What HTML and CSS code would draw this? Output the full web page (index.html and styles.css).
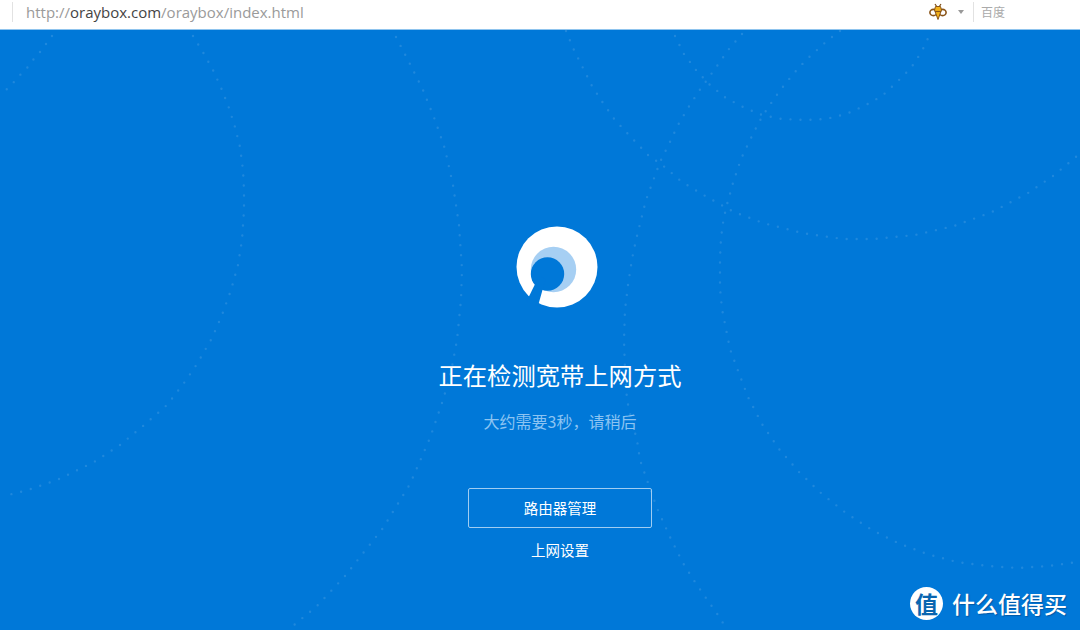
FILE: index.html
```html
<!DOCTYPE html>
<html lang="zh-CN">
<head>
<meta charset="utf-8">
<title>oraybox</title>
<link rel="stylesheet" href="styles.css">
</head>
<body>
<header class="bar">
  <div class="url"><span class="dim">http://</span><span class="host">oraybox.com</span><span class="dim">/oraybox/index.html</span></div>
  <div class="search">
    <svg class="bee" width="18" height="18" viewBox="0 0 18 18">
      <path class="bee-line" d="M6 1 8 4M12 1 10 4"/>
      <ellipse class="bee-wing" cx="4.4" cy="9.5" rx="3.5" ry="3.1"/>
      <ellipse class="bee-wing" cx="13.6" cy="9.5" rx="3.5" ry="3.1"/>
      <path class="bee-body" d="M6.5 3.5h5l1 3.5-3.500 9.500-3.500-9.500z"/>
      <path class="bee-band" d="M5.800 8.500h6.400"/>
    </svg>
    <svg class="caret" width="6" height="4" viewBox="0 0 6 4"><path d="M0 0h6L3 4z"/></svg>
    <span class="divider"></span>
    <span class="engine">百度</span>
  </div>
</header>
<main class="stage">
  <svg class="curves" width="1080" height="600" viewBox="0 30 1080 600">
    <polyline points="52,36 46,44 40,52 33,60 27,68 20,75 13,83 6,90 0,95"/>
    <polyline points="193,36 204,54 214,72 222,90 229,108 235,127 240,147 243,170 244,190 244,210 242,240 238,265 231,290 222,315 212,338 197,364 184,383 167,405 143,426 120,445 94,462 57,480 28,490 8,495"/>
    <polyline points="396,37 410,64 423,90 435,120 445,149 453,185 459,225 462,269 461,300 459,320 457,340 451,372 443,400 430,438 410,484 383,528 345,576 317,606 294,625"/>
    <polyline points="566,31 574,50 583,68 592,86 603,103 615,120 629,135 650,157 660,163 682,182 707,197 734,212 763,223 802,233 843,239 874,239 915,235 954,226 992,212 1028,193 1053,176 1077,156"/>
    <polyline points="840,31 828,40 817,50 806,60 795,72 785,84 776,96 767,109 759,122 750,140 741,159 733,183 726,208 723,223 721,238 720,258 720,288 722,309 726,329 730,349 737,368 748,397 762,424 779,449 799,472 822,494 846,513 872,530 898,543 927,554 957,562 988,566 1018,568 1048,566 1078,562"/>
    <polyline points="675,36 684,54 696,70 710,85 726,98 743,107 762,115 782,119 806,120 826,119 846,114 864,106 882,96 897,82 911,68 922,51 931,32"/>
    <polyline points="742,34 729,49 717,66 699,91 688,108 678,125 669,144 660,162 653,181 646,200 641,220 636,240 632,259 628,285 625,310 624,340 625,370 627,400 632,422 637,440 640,460 647,480 657,508 670,537 683,563 695,582 706,598 718,615 723,623"/>
  </svg>
  <div class="panel">
    <svg class="logo" width="82" height="82" viewBox="0 0 82 82">
      <circle class="logo-white" cx="41" cy="41" r="40.5"/>
      <circle class="logo-light" cx="37.500" cy="43.500" r="22.700"/>
      <circle class="logo-hole" cx="31.500" cy="48" r="16.700"/>
      <path class="logo-hole" d="M23 50 29.600 53 22 80 10.500 75.500z"/>
    </svg>
    <h1 class="title">正在检测宽带上网方式</h1>
    <p class="hint">大约需要3秒，请稍后</p>
    <a class="btn">路由器管理</a>
    <a class="link">上网设置</a>
  </div>
</main>
<div class="mark">
  <span class="mark-badge">值</span>
  <span class="mark-text">什么值得买</span>
</div>
</body>
</html>
```
FILE: styles.css
```css
* { box-sizing: border-box; }
html, body { margin: 0; height: 100%; }
body {
  width: 1080px;
  height: 630px;
  overflow: hidden;
  display: flex;
  flex-direction: column;
  position: relative;
  font-family: "Noto Sans CJK SC", "Noto Sans", sans-serif;
  background: #0078d8;
}
.bar {
  height: 30px;
  flex: none;
  background: #fff;
  border-bottom: 1px solid #8fc4ee;
  display: flex;
  justify-content: space-between;
  padding: 2px 0 0 12px;
}
.url {
  height: 20px;
  border-left: 1px solid #e2e2e2;
  padding-left: 13px;
  font: 15px/20px "Open Sans", sans-serif;
  white-space: nowrap;
}
.dim { color: #9a9a9a; }
.host { color: #444; }
.search {
  width: 151px;
  height: 20px;
  display: flex;
  align-items: center;
}
.bee { flex: none; }
.bee-line { fill: none; stroke: #7a4a12; stroke-width: 1.2; }
.bee-wing { fill: #fff; stroke: #8a5418; stroke-width: 1.6; }
.bee-body { fill: #f2b21c; stroke: #8a5418; stroke-width: 1; }
.bee-band { stroke: #8a5418; stroke-width: 1.2; }
.caret { margin-left: 11px; fill: #999; }
.divider { width: 1px; height: 20px; background: #e2e2e2; margin-left: 9px; }
.engine { margin-left: 7px; font-size: 12px; line-height: 20px; color: #aaa; }
.stage {
  flex: 1;
  position: relative;
}
.curves {
  position: absolute;
  left: 0;
  top: 0;
  fill: none;
  stroke: #fff;
  stroke-opacity: .12;
  stroke-width: 2.4;
  stroke-linecap: round;
  stroke-dasharray: 0 10;
}
.panel {
  position: relative;
  display: flex;
  flex-direction: column;
  align-items: center;
  padding: 196px 0 0 40px;
  color: #fff;
}
.logo { display: block; margin-left: -6px; }
.logo-white { fill: #fff; }
.logo-light { fill: #a6cff3; }
.logo-hole { fill: #0078d8; }
.title {
  margin: 49px 0 0;
  font-size: 24.3px;
  line-height: 36px;
  font-weight: 400;
}
.hint {
  margin: 16px 0 0;
  font-size: 16px;
  line-height: 24px;
  color: #8cc4f2;
}
.btn {
  margin-top: 55px;
  width: 184px;
  height: 40px;
  border: 1px solid #a0cdf2;
  border-radius: 2px;
  font-size: 14.5px;
  line-height: 38px;
  text-align: center;
}
.link {
  margin-top: 11px;
  font-size: 14.5px;
  line-height: 22px;
}
.mark {
  position: absolute;
  left: 910px;
  top: 587px;
  display: flex;
  align-items: center;
  gap: 9px;
  color: #fff;
}
.mark-badge {
  width: 33px;
  height: 33px;
  border-radius: 50%;
  background: #fff;
  color: #0a66b0;
  font-size: 23px;
  line-height: 32px;
  font-weight: 700;
  text-align: center;
}
.mark-text {
  font-size: 23px;
  line-height: 33px;
  font-weight: 500;
  text-shadow: 1px 1px 1px rgba(0, 60, 120, .5);
}
```
